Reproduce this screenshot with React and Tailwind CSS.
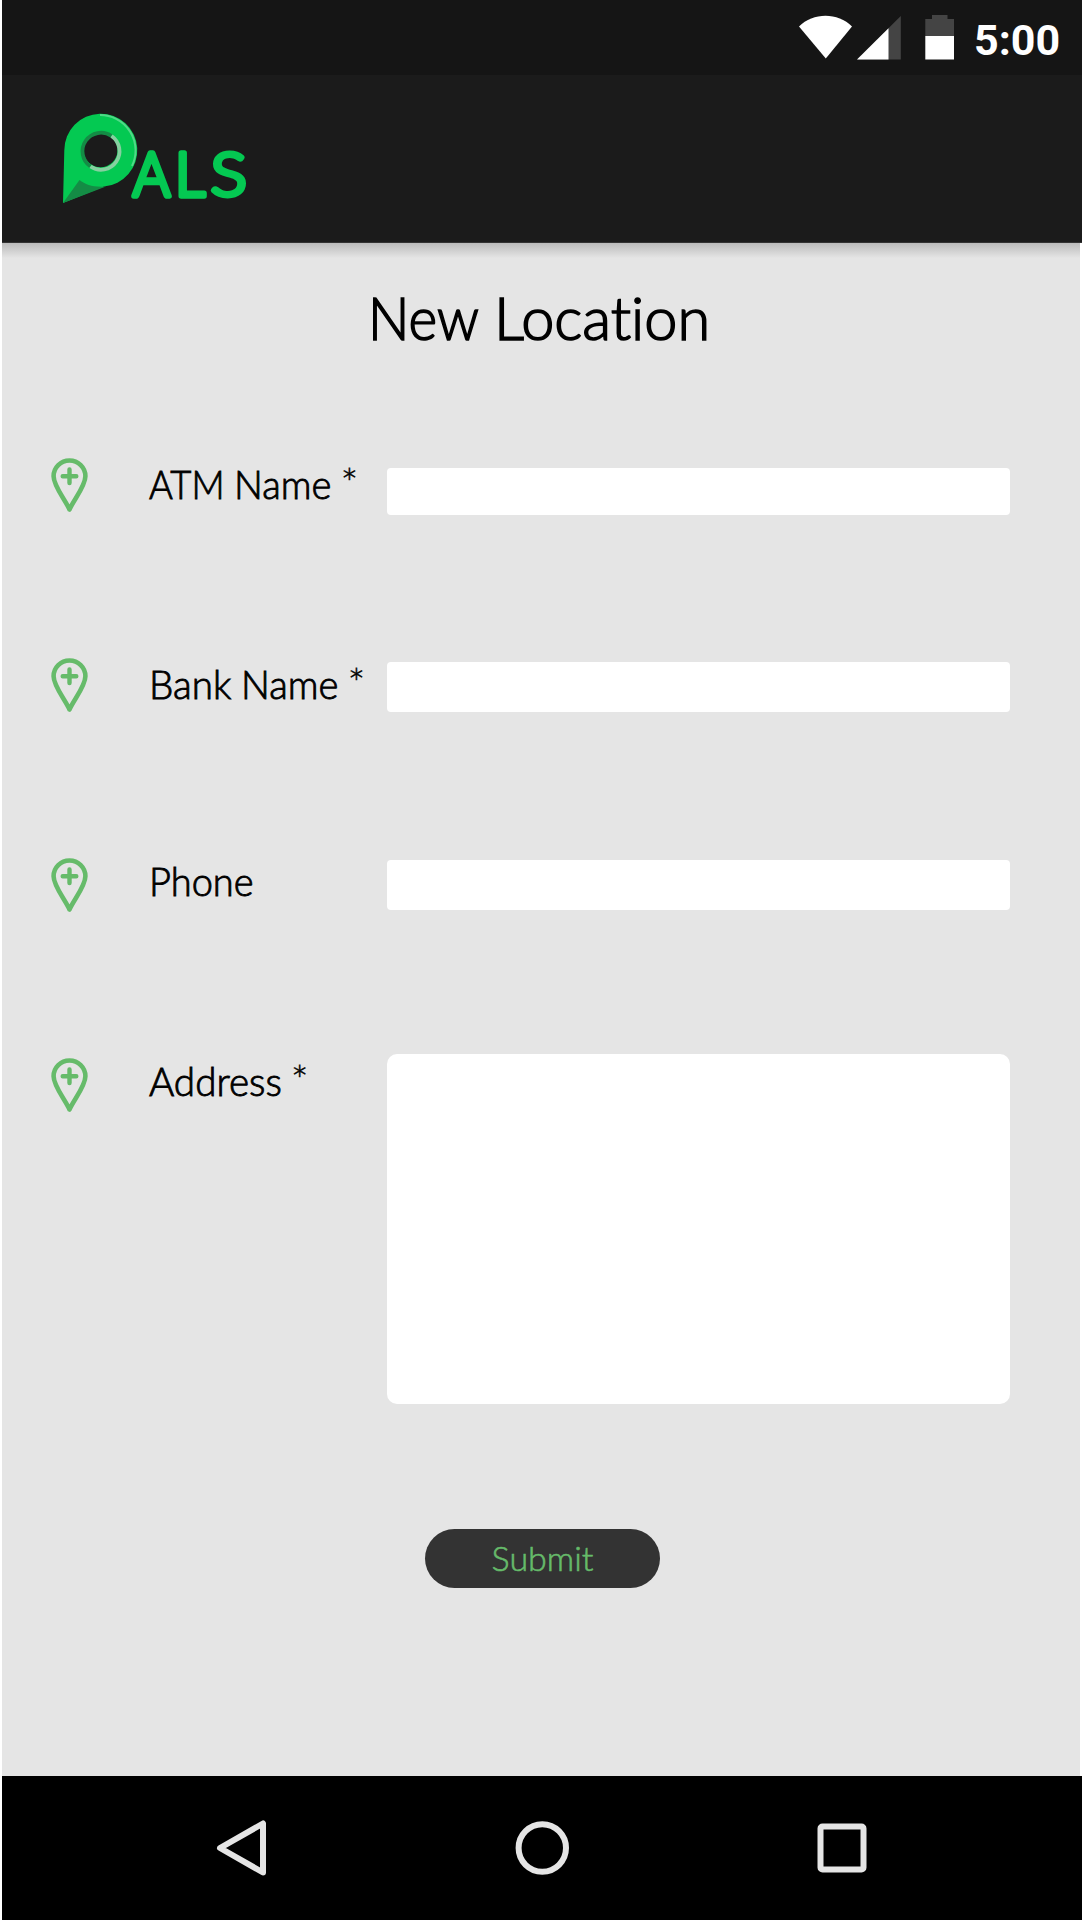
function StatusBar() {
  return (
    <div className="flex h-[75px] bg-[#151515]">
      <svg className="ml-[796px] h-[75px] w-[160px] shrink-0" viewBox="798 0 160 75">
        <path d="M799 26.500C813 12.300 838 12.300 852 26.500L825.800 58.500Z" fill="#fff" />
        <path d="M900.800 16V59.500H857Z" fill="#444" />
        <path d="M888.500 28.300V59.500H857Z" fill="#fff" />
        <path d="M932 15h15.500v4H954v17H925.300V19H932Z" fill="#444" />
        <path d="M925.300 36H954V59.500H925.300Z" fill="#fff" />
      </svg>
      <span className="ml-[16px] mt-[15px] font-['Roboto',sans-serif] text-[43px] font-bold leading-[50px] text-white">5:00</span>
    </div>
  );
}

function Logo() {
  return (
    <svg
      className="h-[110px] w-[200px]"
      viewBox="50 105 200 110"
      fill="#04c952"
      stroke="#04c952"
      strokeWidth="5.600"
      strokeLinejoin="round"
      fontFamily="Lato, sans-serif"
      fontWeight="300"
      fontSize="61.500"
    >
      <g stroke="none">
        <path fillRule="evenodd" d="M63 203L64.300 150.300A36.500 36.500 0 1 1 104 186.600ZM83.500 150.300a17 17 0 1 0 34 0a17 17 0 1 0 -34 0Z" />
        <path d="M63 203L79.500 180C86 185 94 187.500 106 186.400Z" fill="#148c45" />
      </g>
      <g fill="none" strokeLinejoin="miter">
        <path d="M100 115A35.500 35.500 0 0 1 132 166" stroke="#50d987" strokeWidth="2" />
        <path d="M90.500 166.500A18 18 0 0 1 111.500 136" stroke="#148c45" strokeWidth="3.800" />
        <path d="M111.500 136A18 18 0 0 1 90.500 166.500" stroke="#86d0a0" strokeWidth="3.800" />
      </g>
      <text x="133" y="196.300" textLength="37" lengthAdjust="spacingAndGlyphs">A</text>
      <text x="175" y="196.300" textLength="30" lengthAdjust="spacingAndGlyphs">L</text>
      <text x="210.500" y="196.300" textLength="36.500" lengthAdjust="spacingAndGlyphs" strokeWidth="5">S</text>
    </svg>
  );
}

function Pin() {
  return (
    <svg className="mt-[16px] h-[55px] w-[37px] shrink-0" viewBox="0 0 37 55" fill="none" stroke="#66bb6a">
      <path d="M18.500 51.500C14 41.500 2.600 28 2.600 18.200A15.900 15.700 0 0 1 34.400 18.200C34.400 28 23 41.500 18.500 51.500Z" strokeWidth="4.600" strokeLinejoin="round" />
      <path d="M18.500 11.500V25M11.700 18.200H25.300" strokeWidth="4.400" strokeLinecap="round" />
    </svg>
  );
}

function Word({ className, children }) {
  return <span className={`inline-block origin-left ${className}`}>{children}</span>;
}

function Row({ label, className, children }) {
  return (
    <label className="flex h-[200px] pl-[49px]">
      <Pin />
      <span className="ml-[60.5px] w-[238.500px] shrink-0">
        <span className={`block whitespace-pre text-[40px] leading-[48px] [-webkit-text-stroke:0.9px_black] ${className}`}>{label}</span>
      </span>
      {children}
    </label>
  );
}

function Required() {
  return <span className="ml-[-3px] text-[42px] leading-none [-webkit-text-stroke:0.4px_black]"> *</span>;
}

export default function App() {
  return (
    <main className="h-[1920px] w-[1082px] overflow-hidden bg-white pl-[2px] font-['Lato',sans-serif] font-light text-black [font-variant-ligatures:none]">
      <div className="flex h-full flex-col">
        <StatusBar />
        <header className="h-[168px] shrink-0 border-b border-[#333] bg-[#1b1b1b] pl-[48px] pt-[30px]">
          <Logo />
        </header>
        <section className="w-[1078px] flex-1 bg-[#e5e5e5]">
          <div className="h-[15px] bg-gradient-to-b from-[#bbb] to-[#e5e5e5]" />
          <h1 className="mt-[23px] h-[72px] whitespace-pre pl-[366px] text-[60px] leading-[72px] [-webkit-text-stroke:1.6px_black]">
            <Word className="mr-[-12px] scale-x-[0.915]">New</Word>{" "}
            <Word className="scale-x-[0.99]">Location</Word>
          </h1>
          <form className="mt-[89px]" onSubmit={(e) => e.preventDefault()}>
            <Row
              className="mt-[18px]"
              label={<><Word className="mr-[-8px] scale-x-[0.91]">ATM</Word> <Word className="mr-[-4px] scale-x-[0.955]">Name</Word><Required /></>}
            >
              <input className="mt-[25.5px] h-[47.500px] w-[622.500px] rounded-[4px] bg-white" />
            </Row>
            <Row
              className="mt-[18px]"
              label={<><Word className="mr-[-3.5px] scale-x-[0.965]">Bank</Word> <Word className="mr-[-4px] scale-x-[0.955]">Name</Word><Required /></>}
            >
              <input className="mt-[20px] h-[50px] w-[622.500px] rounded-[4px] bg-white" />
            </Row>
            <Row className="mt-[15px]" label={<Word className="scale-x-[0.95]">Phone</Word>}>
              <input className="mt-[18px] h-[50px] w-[622.500px] rounded-[4px] bg-white" />
            </Row>
            <Row className="mt-[15px]" label={<><Word className="mr-[-4px] scale-x-[0.965]">Address</Word><Required /></>}>
              <textarea className="mt-[12px] h-[350px] w-[622.500px] shrink-0 resize-none rounded-[10px] bg-white" />
            </Row>
            <button className="ml-[423px] mt-[286.500px] h-[59px] w-[235px] rounded-full bg-[#333] text-[34px] leading-[58px] text-[#66bb6a] [-webkit-text-stroke:0.6px_#66bb6a]">
              Submit
            </button>
          </form>
        </section>
        <nav className="h-[144px] shrink-0 bg-black">
          <svg className="h-[144px] w-[1080px]" viewBox="2 1776 1080 144" fill="none" stroke="#e5e5e5" strokeWidth="6" strokeLinejoin="round">
            <path d="M220 1848L263 1823.500V1872.500Z" />
            <circle cx="542.300" cy="1848" r="23.700" />
            <rect x="820.500" y="1826.500" width="43" height="43" rx="2" />
          </svg>
        </nav>
      </div>
    </main>
  );
}
